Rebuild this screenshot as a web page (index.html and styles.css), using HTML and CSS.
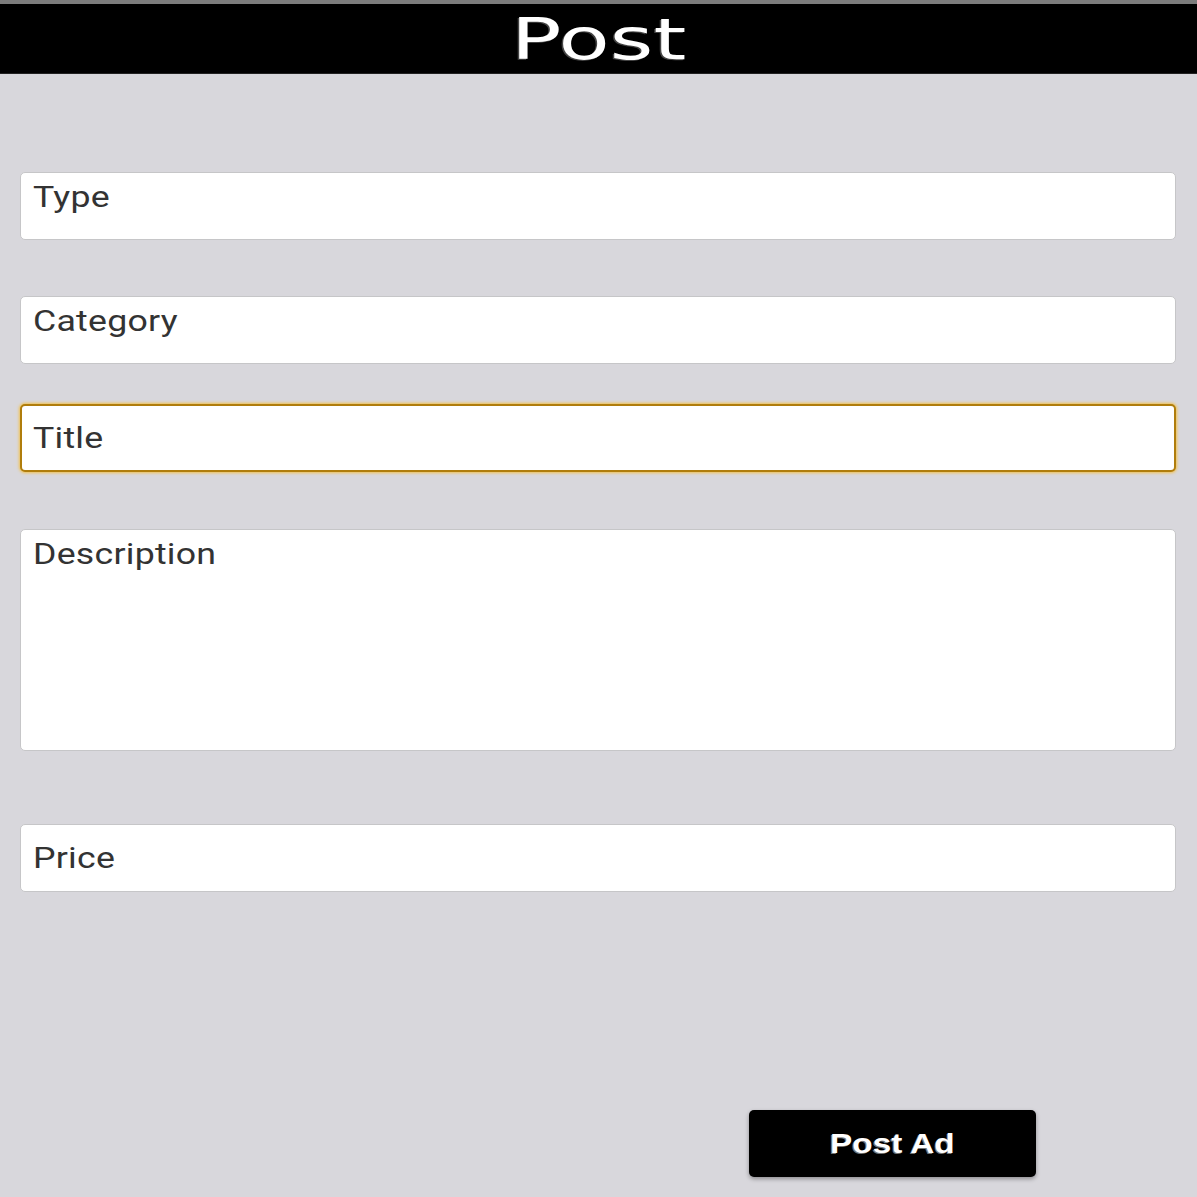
FILE: index.html
```html
<!DOCTYPE html>
<html>
<head>
<meta charset="utf-8">
<link rel="stylesheet" href="styles.css">
</head>
<body>
<div class="topstrip"></div>
<header class="header"><span class="brand">Post</span></header>
<main class="form">
  <div class="field field-type"><span class="label top">Type</span></div>
  <div class="field field-category"><span class="label top">Category</span></div>
  <div class="field field-title focused"><span class="label mid">Title</span></div>
  <div class="field field-desc"><span class="label top">Description</span></div>
  <div class="field field-price"><span class="label mid">Price</span></div>
  <div class="actions"><button class="btn"><span class="btn-text">Post Ad</span></button></div>
</main>
</body>
</html>
```
FILE: styles.css
```css
html, body {
  margin: 0;
  padding: 0;
}
body {
  background: #d8d7dc;
  width: 1197px;
  height: 1197px;
  overflow: hidden;
  font-family: Roboto, "Liberation Sans", sans-serif;
}
.topstrip {
  height: 4px;
  background: #7c7c7c;
}
.header {
  height: 69px;
  background: #000;
  border-bottom: 1px solid #222;
  display: flex;
  justify-content: center;
  align-items: center;
  overflow: hidden;
}
.brand {
  display: inline-block;
  color: #fff;
  font-family: "DejaVu Sans", sans-serif;
  font-weight: normal;
  font-size: 57px;
  line-height: 1;
  transform: scaleX(1.47);
  letter-spacing: 0px;
  text-shadow: -1px 1px 0 #444;
  margin-top: 2px;
}
.form {
  display: flex;
  flex-direction: column;
  padding: 0 21px 0 20px;
}
.field {
  background: #fff;
  border: 1px solid #c6c6c8;
  border-radius: 5px;
  height: 66px;
  box-sizing: content-box;
  display: flex;
  padding: 0 12px;
}
.label {
  color: #333;
  font-size: 29px;
  letter-spacing: 0.2px;
  transform: scaleX(1.23);
  transform-origin: left center;
}
.label.top {
  align-self: flex-start;
  margin-top: 7px;
}
.label.mid {
  align-self: center;
  margin-top: 0;
}
.field-type { margin-top: 98px; }
.field-category { margin-top: 56px; }
.field-title { margin-top: 40px; }
.field-desc { margin-top: 57px; height: 220px; }
.field-price { margin-top: 73px; }
.focused {
  border: 2px solid #b07d0c;
  height: 64px;
  padding: 0 11px;
  box-shadow: 0 0 3px 1px #f2c14e;
}
.actions {
  display: flex;
  padding-left: 729px;
  margin-top: 218px;
}
.btn {
  width: 287px;
  height: 67px;
  background: #000;
  color: #fff;
  border: none;
  border-radius: 5px;
  box-shadow: 0 2px 4px rgba(0,0,0,0.35);
  font-family: "Liberation Sans", Arial, sans-serif;
  font-weight: bold;
  font-size: 28px;
  text-shadow: -1px 1px 0 #777;
  padding: 0;
  display: flex;
  justify-content: center;
  align-items: center;
}
.btn-text {
  display: inline-block;
  transform: scaleX(1.19);
}
```
